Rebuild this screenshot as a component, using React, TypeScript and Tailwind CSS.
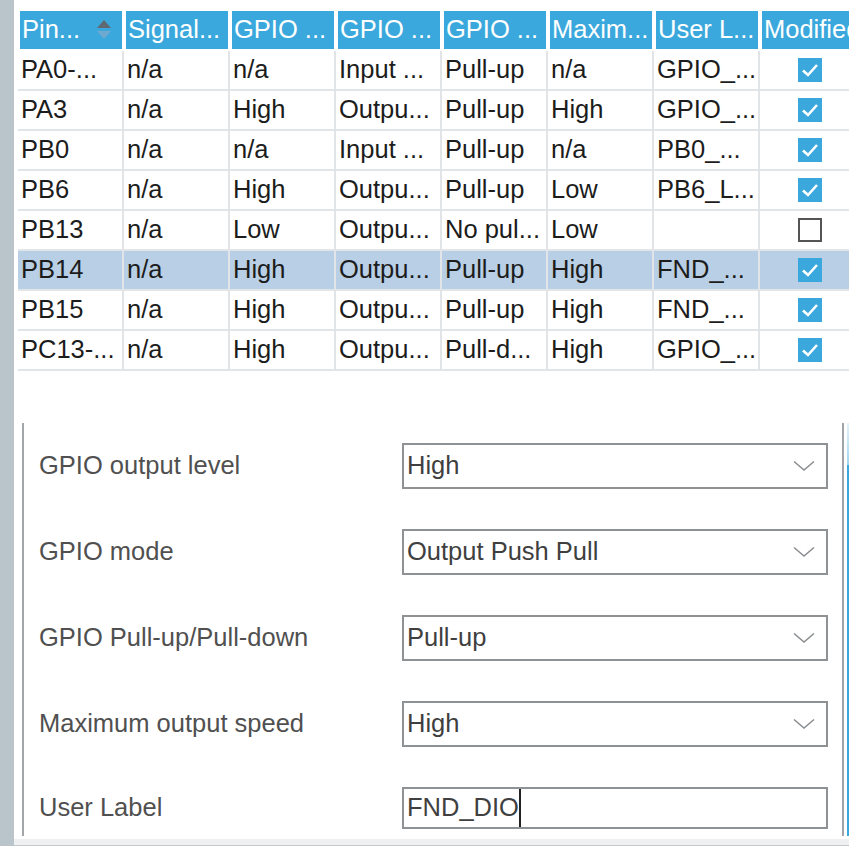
import React from 'react';

const headers = ['Pin...', 'Signal...', 'GPIO ...', 'GPIO ...', 'GPIO ...', 'Maxim...', 'User L...', 'Modified'];

const rows = [
  { cells: ['PA0-...', 'n/a', 'n/a', 'Input ...', 'Pull-up', 'n/a', 'GPIO_...'], checked: true },
  { cells: ['PA3', 'n/a', 'High', 'Outpu...', 'Pull-up', 'High', 'GPIO_...'], checked: true },
  { cells: ['PB0', 'n/a', 'n/a', 'Input ...', 'Pull-up', 'n/a', 'PB0_...'], checked: true },
  { cells: ['PB6', 'n/a', 'High', 'Outpu...', 'Pull-up', 'Low', 'PB6_L...'], checked: true },
  { cells: ['PB13', 'n/a', 'Low', 'Outpu...', 'No pul...', 'Low', ''], checked: false },
  { cells: ['PB14', 'n/a', 'High', 'Outpu...', 'Pull-up', 'High', 'FND_...'], checked: true, selected: true },
  { cells: ['PB15', 'n/a', 'High', 'Outpu...', 'Pull-up', 'High', 'FND_...'], checked: true },
  { cells: ['PC13-...', 'n/a', 'High', 'Outpu...', 'Pull-d...', 'High', 'GPIO_...'], checked: true },
];

const fields = [
  { label: 'GPIO output level', value: 'High' },
  { label: 'GPIO mode', value: 'Output Push Pull' },
  { label: 'GPIO Pull-up/Pull-down', value: 'Pull-up' },
  { label: 'Maximum output speed', value: 'High' },
];

function SortIcon() {
  return (
    <svg width="16" height="20" viewBox="0 0 16 20" className="shrink-0">
      <polygon points="8,0 15,8 1,8" fill="#5f6b72" />
      <polygon points="1,11 15,11 8,19" fill="#6fa9cf" />
    </svg>
  );
}

function Checkbox({ checked }: { checked: boolean }) {
  if (!checked) {
    return <div className="w-[24px] h-[24px] border-2 border-[#555] bg-white" />;
  }
  return (
    <div className="w-[24px] h-[24px] bg-[#3aa8dc] flex items-center justify-center">
      <svg width="24" height="24" viewBox="0 0 24 24">
        <polyline points="5,12.5 10,17 19,7" fill="none" stroke="white" strokeWidth="2.6" />
      </svg>
    </div>
  );
}

function Chevron() {
  return (
    <svg width="22" height="12" viewBox="0 0 22 12" className="shrink-0">
      <polyline points="1,1.5 11,10 21,1.5" fill="none" stroke="#8a8d90" strokeWidth="1.5" />
    </svg>
  );
}

export default function App() {
  return (
    <div className="w-[849px] h-[846px] bg-white overflow-hidden flex font-['Liberation_Sans',Arial,sans-serif]">
      {/* left strip */}
      <div className="w-[14px] shrink-0 bg-[#b9c4cb]" />

      <div className="flex-1 min-w-0 flex flex-col overflow-hidden">
        {/* Pin table */}
        <div className="pt-[11px] pl-[4px] overflow-hidden">
          <div className="flex h-[38px]">
            {headers.map((h, i) => (
              <div key={i} className="w-[106px] shrink-0 px-[2px] h-full">
                <div className="h-full bg-[#3aa8dc] text-white text-[25.5px] leading-none flex items-center pl-[2px] whitespace-nowrap overflow-hidden">
                  <span>{h}</span>
                  {i === 0 && (
                    <div className="ml-auto mr-[10px]">
                      <SortIcon />
                    </div>
                  )}
                </div>
              </div>
            ))}
          </div>
          <div className="mt-[2px]">
            {rows.map((r, ri) => (
              <div
                key={ri}
                className={`flex h-[40px] border-b-2 border-[#e2e5e8] ${r.selected ? 'bg-[#b9cfe5]' : 'bg-white'}`}
              >
                {r.cells.map((c, ci) => (
                  <div
                    key={ci}
                    className="w-[106px] shrink-0 border-r-2 border-[#e2e5e8] pl-[3px] flex items-center text-[25.5px] leading-none text-[#1c1c1c] whitespace-nowrap overflow-hidden"
                  >
                    {c}
                  </div>
                ))}
                <div className="w-[106px] shrink-0 flex items-center pl-[38px]">
                  <Checkbox checked={r.checked} />
                </div>
              </div>
            ))}
          </div>
        </div>

        {/* Configuration panel */}
        <div className="mt-[52px] ml-[8px] h-[413px] flex">
          <div className="w-[822px] shrink-0 border-l-2 border-r-2 border-l-[#a3a6a9] border-r-[#a0a4a8] pt-[20px] flex flex-col gap-[40px]">
            {fields.map((f) => (
              <div key={f.label} className="flex items-center h-[46px]">
                <div className="pl-[15px] text-[25.5px] leading-none text-[#505050]">{f.label}</div>
                <div className="ml-auto mr-[14px] w-[426px] h-[46px] border-2 border-[#8e9295] flex items-center pl-[3px] pr-[11px]">
                  <span className="text-[25.5px] leading-none text-[#3f3f3f]">{f.value}</span>
                  <div className="ml-auto">
                    <Chevron />
                  </div>
                </div>
              </div>
            ))}
            <div className="flex items-center h-[42px]">
              <div className="pl-[15px] text-[25.5px] leading-none text-[#505050]">User Label</div>
              <div className="ml-auto mr-[14px] w-[426px] h-[42px] border-2 border-[#8e9295] flex items-center pl-[3px]">
                <span className="text-[25.5px] leading-none text-[#3f3f3f]">FND_DIO</span>
                <span className="w-[2px] h-[38px] bg-[#222]" />
              </div>
            </div>
          </div>
          <div className="w-[3px] shrink-0" />
          <div className="w-[2px] shrink-0 flex flex-col">
            <div className="h-[42px] bg-gradient-to-b from-[#e6f3fa] to-[#9fd3ef]" />
            <div className="flex-1 bg-[#3aa8dc]" />
          </div>
        </div>

        <div className="h-[3px]" />
        <div className="h-[6px] bg-[#eff0f2]" />
        <div className="h-[1px] bg-[#c3c9cd]" />
      </div>
    </div>
  );
}
